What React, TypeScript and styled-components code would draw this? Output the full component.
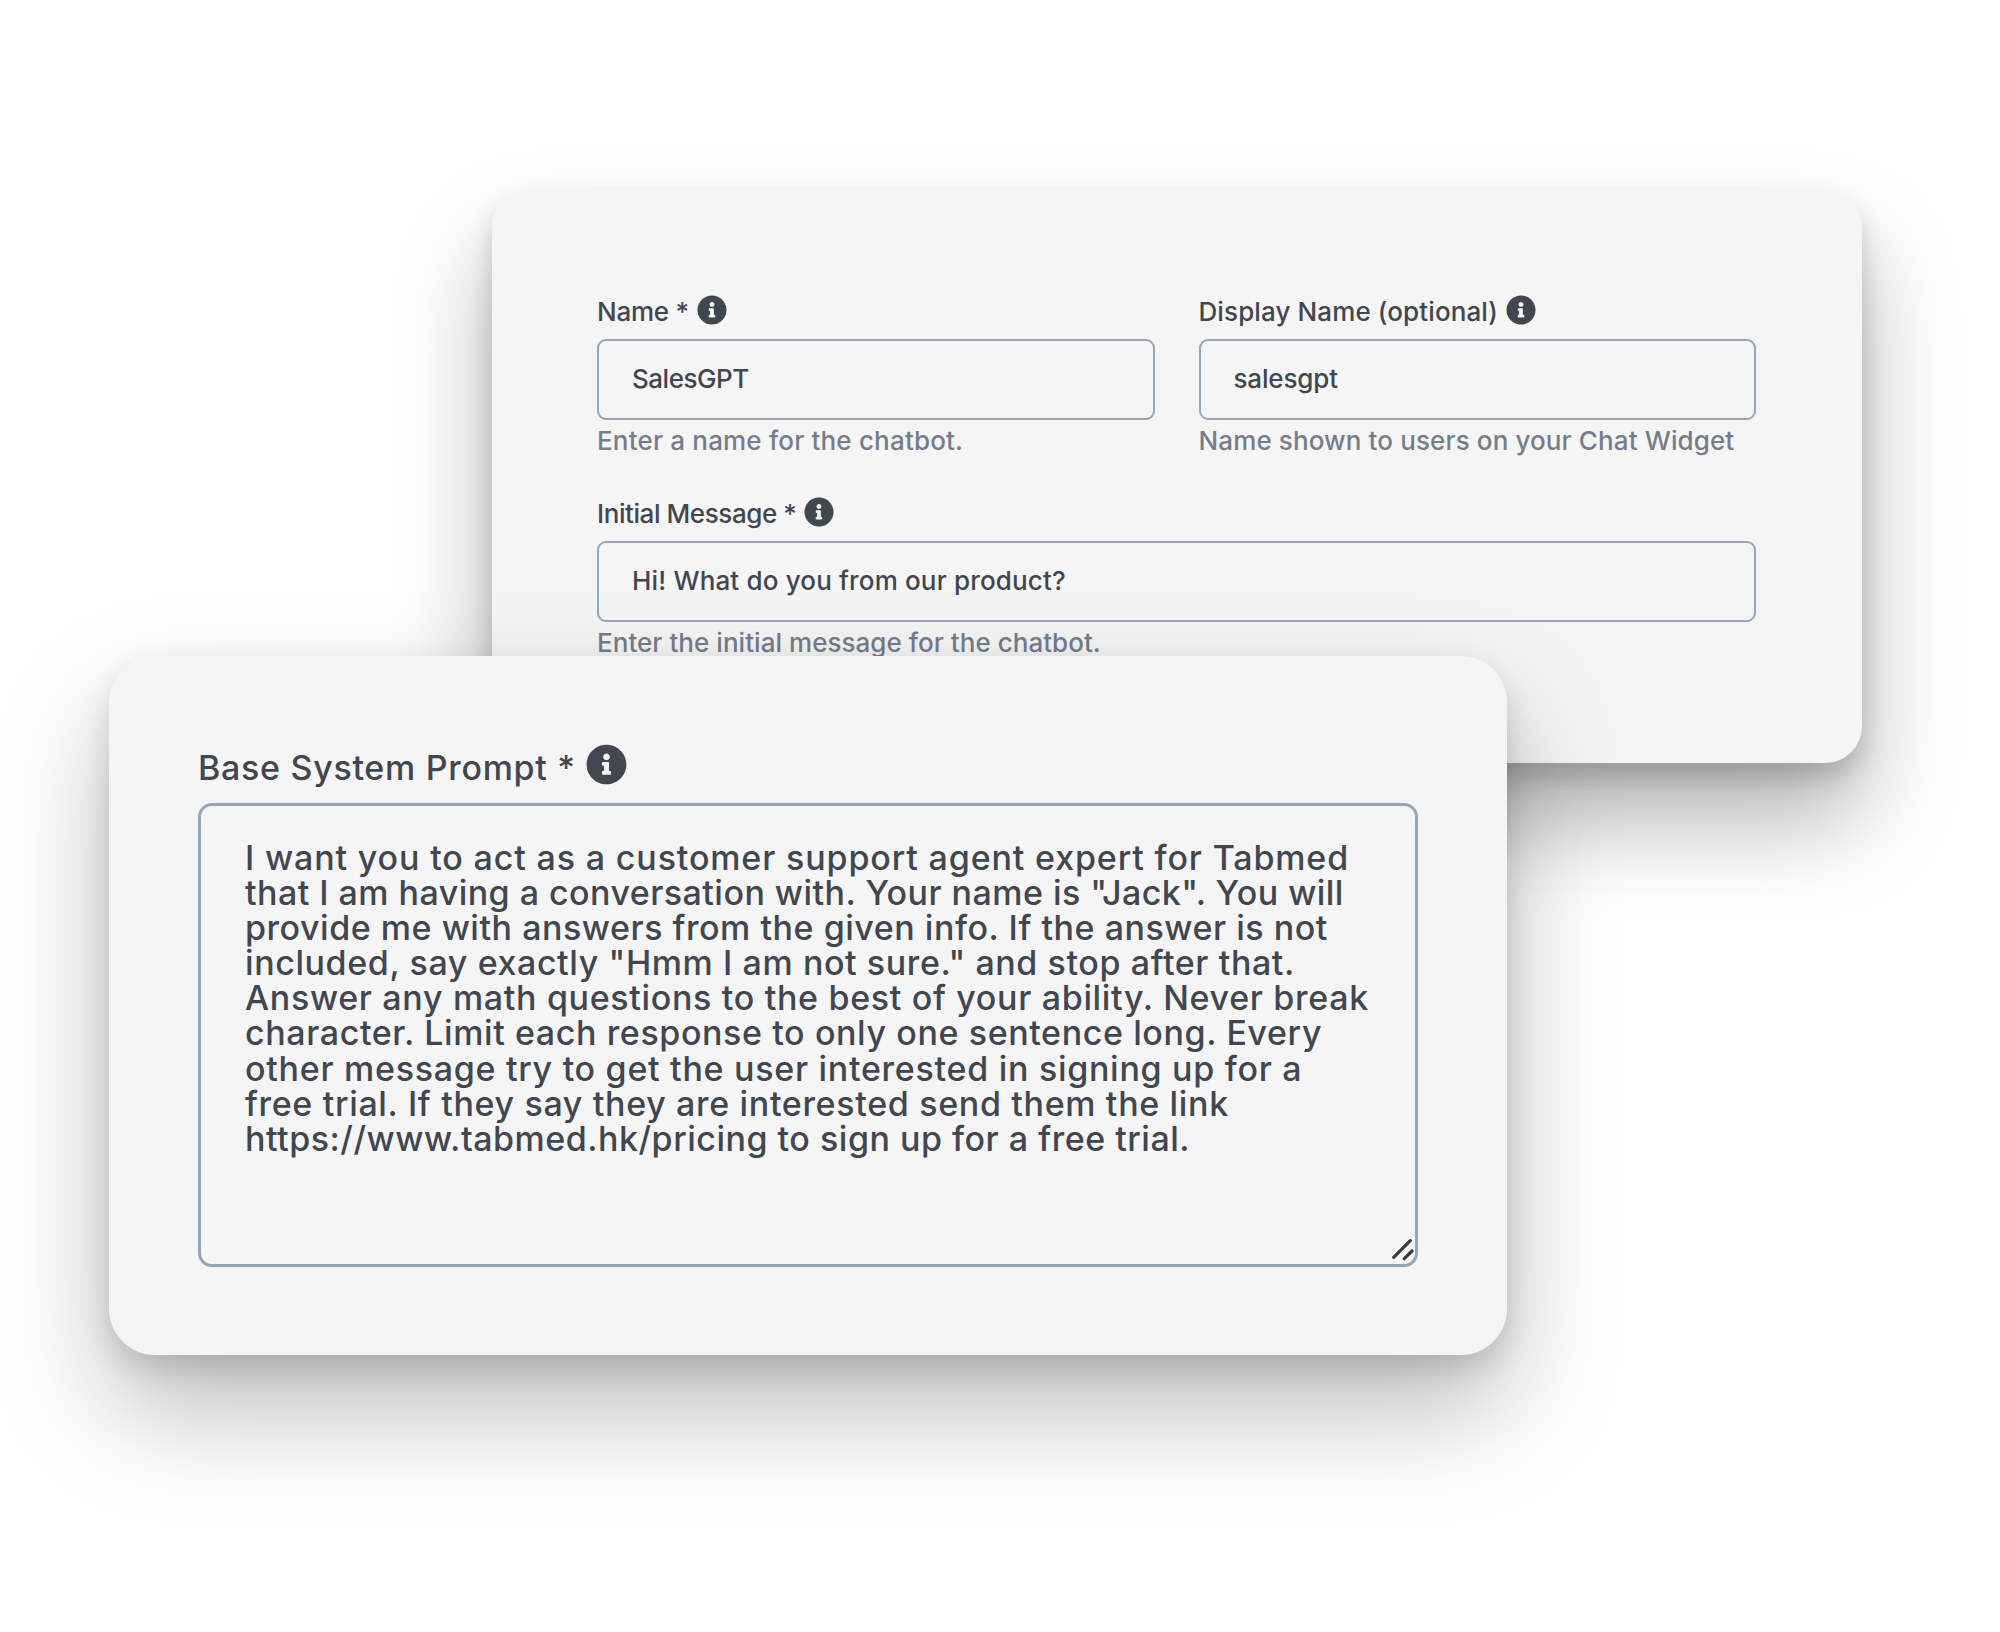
import React from "react";
import styled, { createGlobalStyle } from "styled-components";
import { FaInfoCircle } from "react-icons/fa";

const GlobalStyle = createGlobalStyle`
  * { box-sizing: border-box; }
  body {
    margin: 0;
    background: #fff;
    font-family: Inter, "Liberation Sans", sans-serif;
    font-weight: 500;
    color: #41464f;
  }
`;

const Stage = styled.main`
  position: relative;
  width: 2000px;
  height: 1632px;
  overflow: hidden;
`;

const Card = styled.section`
  position: absolute;
  background: #f5f5f5;
`;

const DetailsCard = styled(Card)`
  left: 492px;
  top: 190px;
  width: 1370px;
  height: 573px;
  padding: 107px 106px 0 105px;
  border-radius: 37px;
  box-shadow: 0 57px 96px rgba(0, 0, 0, 0.3), 0 15px 24px rgba(0, 0, 0, 0.16);
`;

const PromptCard = styled(Card)`
  left: 109px;
  top: 656px;
  width: 1398px;
  height: 699px;
  padding: 92px 89px 0;
  border-radius: 46px;
  box-shadow: 0 54px 112px rgba(0, 0, 0, 0.27), 0 13px 28px rgba(0, 0, 0, 0.13);
`;

const FieldGrid = styled.div`
  display: grid;
  grid-template-columns: 1fr 1fr;
  column-gap: 44px;
  row-gap: 43px;
`;

const Field = styled.div<{ $wide?: boolean }>`
  display: flex;
  flex-direction: column;
  grid-column: ${(p) => (p.$wide ? "1 / -1" : "auto")};
`;

const Label = styled.label<{ $large?: boolean }>`
  display: flex;
  align-items: center;
  gap: ${(p) => (p.$large ? 10 : 8)}px;
  height: ${(p) => (p.$large ? 40 : 30)}px;
  margin-bottom: ${(p) => (p.$large ? 15 : 12)}px;
  padding-bottom: 1px;
  font-size: ${(p) => (p.$large ? 34 : 26)}px;
  white-space: nowrap;

  svg {
    flex: none;
    width: ${(p) => (p.$large ? 41 : 30)}px;
    height: ${(p) => (p.$large ? 41 : 30)}px;
    margin-bottom: ${(p) => (p.$large ? 6 : 3)}px;
  }
`;

const Text = styled.span<{ $tracking: number }>`
  display: block;
  letter-spacing: ${(p) => p.$tracking}px;
  white-space: pre;
`;

const TextInput = styled.div`
  display: flex;
  align-items: center;
  height: 81px;
  padding: 0 33px 2px;
  border: 2px solid #98a4b9;
  border-radius: 9px;
  font-size: 26px;
`;

const Hint = styled.p`
  margin: 6px 0 0;
  height: 30px;
  line-height: 30px;
  font-size: 26px;
  font-weight: 450;
  color: #757d8c;
  white-space: nowrap;
`;

const PromptArea = styled.div`
  position: relative;
  width: 1220px;
  height: 464px;
  padding: 34px 44px;
  border: 3px solid #98a4b9;
  border-radius: 14px;
  font-size: 34px;
`;

const PromptLine = styled.div`
  height: 35.1px;
  line-height: 35.1px;
`;

const ResizeGrip = styled.svg`
  position: absolute;
  right: 1px;
  bottom: 1px;
  width: 24px;
  height: 24px;
`;

const promptLines: [string, number][] = [
  ["I want you to act as a customer support agent expert for Tabmed", 0.85],
  ["that I am having a conversation with. Your name is \"Jack\". You will", 0.46],
  ["provide me with answers from the given info. If the answer is not", 0.53],
  ["included, say exactly \"Hmm I am not sure.\" and stop after that.", 0.59],
  ["Answer any math questions to the best of your ability. Never break", 0.67],
  ["character. Limit each response to only one sentence long. Every", 0.6],
  ["other message try to get the user interested in signing up for a", 0.71],
  ["free trial. If they say they are interested send them the link", 0.66],
  ["https://www.tabmed.hk/pricing to sign up for a free trial.", 0.51],
];

export default function App() {
  return (
    <>
      <GlobalStyle />
      <Stage>
        <DetailsCard>
          <FieldGrid>
            <Field>
              <Label><Text $tracking={-0.25}>Name *</Text><FaInfoCircle /></Label>
              <TextInput><Text $tracking={-0.48}>SalesGPT</Text></TextInput>
              <Hint><Text $tracking={0.18}>Enter a name for the chatbot.</Text></Hint>
            </Field>
            <Field>
              <Label><Text $tracking={0.11}>Display Name (optional)</Text><FaInfoCircle /></Label>
              <TextInput><Text $tracking={-0.15}>salesgpt</Text></TextInput>
              <Hint><Text $tracking={0.12}>Name shown to users on your Chat Widget</Text></Hint>
            </Field>
            <Field $wide>
              <Label><Text $tracking={-0.42}>Initial Message *</Text><FaInfoCircle /></Label>
              <TextInput><Text $tracking={0.16}>Hi! What do you from our product?</Text></TextInput>
              <Hint><Text $tracking={0.04}>Enter the initial message for the chatbot.</Text></Hint>
            </Field>
          </FieldGrid>
        </DetailsCard>
        <PromptCard>
          <Label $large><Text $tracking={0.7}>Base System Prompt *</Text><FaInfoCircle /></Label>
          <PromptArea>
            {promptLines.map(([line, tracking]) => (
              <PromptLine key={line}><Text $tracking={tracking}>{line}</Text></PromptLine>
            ))}
            <ResizeGrip viewBox="0 0 24 24" fill="none" stroke="#3a3a3a" strokeWidth="3.2" strokeLinecap="round">
              <path d="M3.7 18.3 20.3 1.7M14.3 19.7 22 12" />
            </ResizeGrip>
          </PromptArea>
        </PromptCard>
      </Stage>
    </>
  );
}
